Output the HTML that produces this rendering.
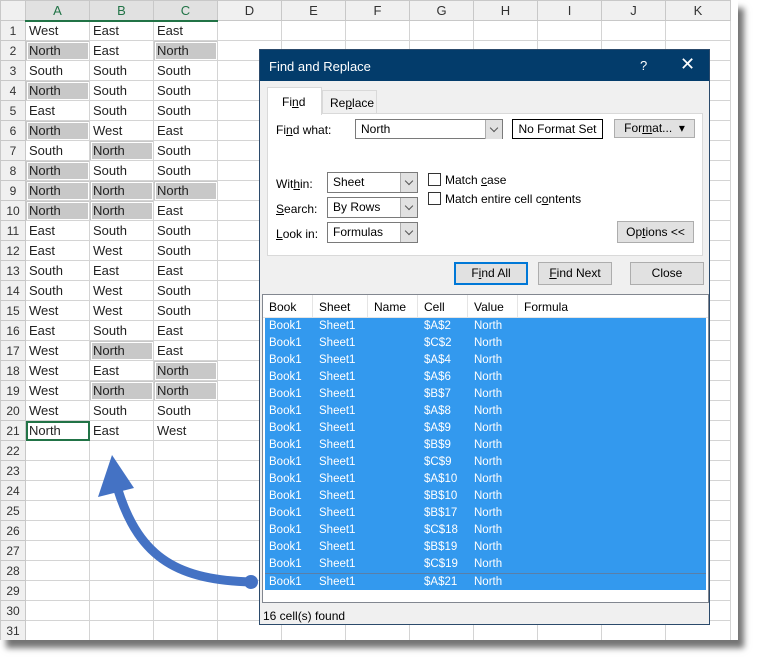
<!DOCTYPE html>
<html><head><meta charset="utf-8"><style>
*{box-sizing:border-box;margin:0;padding:0}
body{width:767px;height:665px;background:#fff;font-family:"Liberation Sans",sans-serif;position:relative;overflow:hidden}
#sheetwrap{position:absolute;left:0;top:0;width:738px;height:640px;overflow:hidden;background:#fff;box-shadow:6px 8px 6px rgba(0,0,0,.55)}
table{border-collapse:collapse;table-layout:fixed;position:absolute;left:0;top:0}
td{height:20px;border:1px solid #d4d4d4;font-size:13px;color:#222;padding:0 3px;white-space:nowrap;overflow:hidden}
tr.h td{background:#f0f0f0;text-align:center;color:#333;border-color:#c8c8c8}
td.r{background:#f0f0f0;text-align:center;color:#333;font-size:12px;padding:0;border-color:#c8c8c8}
td.s{background:#c8c8c8;outline:1px solid #fff;outline-offset:-2px}
tr.h td.sel{background:#e1e1e1;color:#217346;border-bottom:2px solid #217346}
#dlg{position:absolute;left:259px;top:49px;width:451px;height:576px;background:#f0f0f0;border:1px solid #2b4a6b;font-size:12px;color:#000}
#tb{height:31px;background:#033c6b;color:#fff;font-size:13px;padding:9px 0 0 9px;position:relative}
.btn{position:absolute;background:#e1e1e1;border:1px solid #adadad;text-align:center;font-size:12px;line-height:20px}
.cb{position:absolute;border:1px solid #7a7a7a;background:#fff;height:21px;line-height:19px;padding-left:5px}
.cb i{position:absolute;right:0;top:0;width:17px;height:19px;background:#e1e1e1;border-left:1px solid #adadad}
.cb i:after{content:"";position:absolute;left:5px;top:5px;width:5px;height:5px;border-right:1px solid #555;border-bottom:1px solid #555;transform:rotate(45deg)}
.lbl{position:absolute}
u{text-decoration:underline}
#list{position:absolute;left:2px;top:244px;width:447px;height:309px;background:#fff;border:1px solid #828790}
.lh{height:23px;border-bottom:1px solid #e5e5e5;position:relative}
.lh span{position:absolute;top:5px}
.row{height:17px;background:#3399ee;color:#fff;position:relative;font-size:11.5px;margin:0 2px}
.row span{position:absolute;top:2px}
</style></head><body>
<div id="sheetwrap">
<table>
<colgroup><col style="width:25px"><col style="width:64px"><col style="width:64px"><col style="width:64px"><col style="width:64px"><col style="width:64px"><col style="width:64px"><col style="width:64px"><col style="width:64px"><col style="width:64px"><col style="width:64px"><col style="width:65px"></colgroup>
<tr class="h"><td></td><td class="sel">A</td><td class="sel">B</td><td class="sel">C</td><td>D</td><td>E</td><td>F</td><td>G</td><td>H</td><td>I</td><td>J</td><td>K</td></tr>
<tr><td class="r">1</td><td>West</td><td>East</td><td>East</td><td></td><td></td><td></td><td></td><td></td><td></td><td></td><td></td></tr>
<tr><td class="r">2</td><td class="s">North</td><td>East</td><td class="s">North</td><td></td><td></td><td></td><td></td><td></td><td></td><td></td><td></td></tr>
<tr><td class="r">3</td><td>South</td><td>South</td><td>South</td><td></td><td></td><td></td><td></td><td></td><td></td><td></td><td></td></tr>
<tr><td class="r">4</td><td class="s">North</td><td>South</td><td>South</td><td></td><td></td><td></td><td></td><td></td><td></td><td></td><td></td></tr>
<tr><td class="r">5</td><td>East</td><td>South</td><td>South</td><td></td><td></td><td></td><td></td><td></td><td></td><td></td><td></td></tr>
<tr><td class="r">6</td><td class="s">North</td><td>West</td><td>East</td><td></td><td></td><td></td><td></td><td></td><td></td><td></td><td></td></tr>
<tr><td class="r">7</td><td>South</td><td class="s">North</td><td>South</td><td></td><td></td><td></td><td></td><td></td><td></td><td></td><td></td></tr>
<tr><td class="r">8</td><td class="s">North</td><td>South</td><td>South</td><td></td><td></td><td></td><td></td><td></td><td></td><td></td><td></td></tr>
<tr><td class="r">9</td><td class="s">North</td><td class="s">North</td><td class="s">North</td><td></td><td></td><td></td><td></td><td></td><td></td><td></td><td></td></tr>
<tr><td class="r">10</td><td class="s">North</td><td class="s">North</td><td>East</td><td></td><td></td><td></td><td></td><td></td><td></td><td></td><td></td></tr>
<tr><td class="r">11</td><td>East</td><td>South</td><td>South</td><td></td><td></td><td></td><td></td><td></td><td></td><td></td><td></td></tr>
<tr><td class="r">12</td><td>East</td><td>West</td><td>South</td><td></td><td></td><td></td><td></td><td></td><td></td><td></td><td></td></tr>
<tr><td class="r">13</td><td>South</td><td>East</td><td>East</td><td></td><td></td><td></td><td></td><td></td><td></td><td></td><td></td></tr>
<tr><td class="r">14</td><td>South</td><td>West</td><td>South</td><td></td><td></td><td></td><td></td><td></td><td></td><td></td><td></td></tr>
<tr><td class="r">15</td><td>West</td><td>West</td><td>South</td><td></td><td></td><td></td><td></td><td></td><td></td><td></td><td></td></tr>
<tr><td class="r">16</td><td>East</td><td>South</td><td>East</td><td></td><td></td><td></td><td></td><td></td><td></td><td></td><td></td></tr>
<tr><td class="r">17</td><td>West</td><td class="s">North</td><td>East</td><td></td><td></td><td></td><td></td><td></td><td></td><td></td><td></td></tr>
<tr><td class="r">18</td><td>West</td><td>East</td><td class="s">North</td><td></td><td></td><td></td><td></td><td></td><td></td><td></td><td></td></tr>
<tr><td class="r">19</td><td>West</td><td class="s">North</td><td class="s">North</td><td></td><td></td><td></td><td></td><td></td><td></td><td></td><td></td></tr>
<tr><td class="r">20</td><td>West</td><td>South</td><td>South</td><td></td><td></td><td></td><td></td><td></td><td></td><td></td><td></td></tr>
<tr><td class="r">21</td><td style="outline:2px solid #217346;outline-offset:-2px">North</td><td>East</td><td>West</td><td></td><td></td><td></td><td></td><td></td><td></td><td></td><td></td></tr>
<tr><td class="r">22</td><td></td><td></td><td></td><td></td><td></td><td></td><td></td><td></td><td></td><td></td><td></td></tr>
<tr><td class="r">23</td><td></td><td></td><td></td><td></td><td></td><td></td><td></td><td></td><td></td><td></td><td></td></tr>
<tr><td class="r">24</td><td></td><td></td><td></td><td></td><td></td><td></td><td></td><td></td><td></td><td></td><td></td></tr>
<tr><td class="r">25</td><td></td><td></td><td></td><td></td><td></td><td></td><td></td><td></td><td></td><td></td><td></td></tr>
<tr><td class="r">26</td><td></td><td></td><td></td><td></td><td></td><td></td><td></td><td></td><td></td><td></td><td></td></tr>
<tr><td class="r">27</td><td></td><td></td><td></td><td></td><td></td><td></td><td></td><td></td><td></td><td></td><td></td></tr>
<tr><td class="r">28</td><td></td><td></td><td></td><td></td><td></td><td></td><td></td><td></td><td></td><td></td><td></td></tr>
<tr><td class="r">29</td><td></td><td></td><td></td><td></td><td></td><td></td><td></td><td></td><td></td><td></td><td></td></tr>
<tr><td class="r">30</td><td></td><td></td><td></td><td></td><td></td><td></td><td></td><td></td><td></td><td></td><td></td></tr>
<tr><td class="r">31</td><td></td><td></td><td></td><td></td><td></td><td></td><td></td><td></td><td></td><td></td><td></td></tr>
</table>
</div>

<div id="dlg">
<div id="tb">Find and Replace<span style="position:absolute;left:380px;top:8px">?</span><span style="position:absolute;left:420px;top:4px;font-size:18px">✕</span></div>
<div style="position:absolute;left:7px;top:63px;width:436px;height:143px;background:#fff;border:1px solid #d9d9d9"></div>
<div style="position:absolute;left:7px;top:37px;width:55px;height:28px;background:#fff;border:1px solid #d9d9d9;border-bottom:none;padding:7px 0 0 14px">Fi<u>n</u>d</div>
<div style="position:absolute;left:62px;top:40px;width:55px;height:23px;background:#f0f0f0;border:1px solid #d9d9d9;border-bottom:none;padding:5px 0 0 7px">Re<u>p</u>lace</div>
<div class="lbl" style="left:16px;top:73px">Fi<u>n</u>d what:</div>
<div class="cb" style="left:95px;top:69px;width:148px;height:20px">North<i></i></div>
<div style="position:absolute;left:252px;top:69px;width:91px;height:20px;border:1px solid #000;background:#fff;text-align:center;line-height:18px">No Format Set</div>
<div class="btn" style="left:354px;top:69px;width:81px;height:19px;line-height:17px">For<u>m</u>at... &nbsp;▾</div>
<div class="lbl" style="left:16px;top:127px">Wit<u>h</u>in:</div>
<div class="lbl" style="left:16px;top:152px"><u>S</u>earch:</div>
<div class="lbl" style="left:16px;top:177px"><u>L</u>ook in:</div>
<div class="cb" style="left:67px;top:122px;width:91px">Sheet<i></i></div>
<div class="cb" style="left:67px;top:147px;width:91px">By Rows<i></i></div>
<div class="cb" style="left:67px;top:172px;width:91px">Formulas<i></i></div>
<div style="position:absolute;left:168px;top:123px;width:13px;height:13px;border:1px solid #333;background:#fff"></div>
<div class="lbl" style="left:185px;top:123px">Match <u>c</u>ase</div>
<div style="position:absolute;left:168px;top:142px;width:13px;height:13px;border:1px solid #333;background:#fff"></div>
<div class="lbl" style="left:185px;top:142px">Match entire cell c<u>o</u>ntents</div>
<div class="btn" style="left:357px;top:171px;width:77px;height:22px">Op<u>t</u>ions &lt;&lt;</div>
<div class="btn" style="left:194px;top:212px;width:74px;height:23px;border:2px solid #0078d7;line-height:19px">F<u>i</u>nd All</div>
<div class="btn" style="left:278px;top:212px;width:74px;height:23px"><u>F</u>ind Next</div>
<div class="btn" style="left:370px;top:212px;width:74px;height:23px">Close</div>
<div id="list">
<div class="lh"><span style="left:6px">Book</span><span style="left:56px">Sheet</span><span style="left:111px">Name</span><span style="left:161px">Cell</span><span style="left:211px">Value</span><span style="left:261px">Formula</span>
<i style="position:absolute;left:49px;top:0;height:22px;border-left:1px solid #e5e5e5"></i><i style="position:absolute;left:104px;top:0;height:22px;border-left:1px solid #e5e5e5"></i><i style="position:absolute;left:154px;top:0;height:22px;border-left:1px solid #e5e5e5"></i><i style="position:absolute;left:204px;top:0;height:22px;border-left:1px solid #e5e5e5"></i><i style="position:absolute;left:254px;top:0;height:22px;border-left:1px solid #e5e5e5"></i></div>
<div class="row"><span style="left:4px">Book1</span><span style="left:54px">Sheet1</span><span style="left:159px">$A$2</span><span style="left:209px">North</span></div>
<div class="row"><span style="left:4px">Book1</span><span style="left:54px">Sheet1</span><span style="left:159px">$C$2</span><span style="left:209px">North</span></div>
<div class="row"><span style="left:4px">Book1</span><span style="left:54px">Sheet1</span><span style="left:159px">$A$4</span><span style="left:209px">North</span></div>
<div class="row"><span style="left:4px">Book1</span><span style="left:54px">Sheet1</span><span style="left:159px">$A$6</span><span style="left:209px">North</span></div>
<div class="row"><span style="left:4px">Book1</span><span style="left:54px">Sheet1</span><span style="left:159px">$B$7</span><span style="left:209px">North</span></div>
<div class="row"><span style="left:4px">Book1</span><span style="left:54px">Sheet1</span><span style="left:159px">$A$8</span><span style="left:209px">North</span></div>
<div class="row"><span style="left:4px">Book1</span><span style="left:54px">Sheet1</span><span style="left:159px">$A$9</span><span style="left:209px">North</span></div>
<div class="row"><span style="left:4px">Book1</span><span style="left:54px">Sheet1</span><span style="left:159px">$B$9</span><span style="left:209px">North</span></div>
<div class="row"><span style="left:4px">Book1</span><span style="left:54px">Sheet1</span><span style="left:159px">$C$9</span><span style="left:209px">North</span></div>
<div class="row"><span style="left:4px">Book1</span><span style="left:54px">Sheet1</span><span style="left:159px">$A$10</span><span style="left:209px">North</span></div>
<div class="row"><span style="left:4px">Book1</span><span style="left:54px">Sheet1</span><span style="left:159px">$B$10</span><span style="left:209px">North</span></div>
<div class="row"><span style="left:4px">Book1</span><span style="left:54px">Sheet1</span><span style="left:159px">$B$17</span><span style="left:209px">North</span></div>
<div class="row"><span style="left:4px">Book1</span><span style="left:54px">Sheet1</span><span style="left:159px">$C$18</span><span style="left:209px">North</span></div>
<div class="row"><span style="left:4px">Book1</span><span style="left:54px">Sheet1</span><span style="left:159px">$B$19</span><span style="left:209px">North</span></div>
<div class="row"><span style="left:4px">Book1</span><span style="left:54px">Sheet1</span><span style="left:159px">$C$19</span><span style="left:209px">North</span></div>
<div class="row" style="border-top:1px solid #5a7fa8"><span style="left:4px">Book1</span><span style="left:54px">Sheet1</span><span style="left:159px">$A$21</span><span style="left:209px">North</span></div>
</div>
<div class="lbl" style="left:3px;top:559px">16 cell(s) found</div>
</div>

<svg style="position:absolute;left:0;top:0" width="767" height="665">
<path d="M252,582 C180,580 140,560 118,490" fill="none" stroke="#4472c4" stroke-width="9" stroke-linecap="round"/>
<polygon points="98,497 112,455 134,488" fill="#4472c4"/>
<circle cx="251" cy="582" r="7" fill="#4472c4"/>
</svg>
</body></html>
